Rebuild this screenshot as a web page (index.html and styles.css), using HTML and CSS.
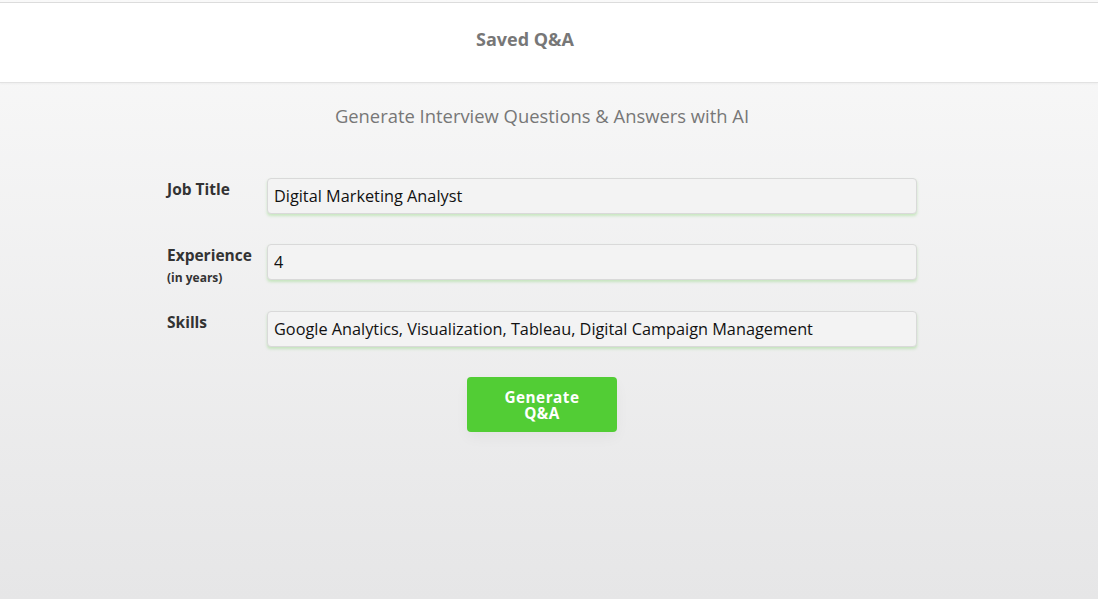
FILE: index.html
```html
<!DOCTYPE html>
<html>
<head>
<meta charset="utf-8">
<link rel="stylesheet" href="styles.css">
</head>
<body>
<header class="topbar">
  <div class="topbar-title">Saved Q&amp;A</div>
</header>
<main class="main">
  <h1 class="subtitle">Generate Interview Questions &amp; Answers with AI</h1>
  <form class="form">
    <div class="row">
      <label class="label"><span class="label-main">Job Title</span></label>
      <input class="field" type="text" value="Digital Marketing Analyst">
    </div>
    <div class="row row-tall">
      <label class="label"><span class="label-main">Experience</span><span class="label-sub">(in years)</span></label>
      <input class="field" type="text" value="4">
    </div>
    <div class="row">
      <label class="label"><span class="label-main">Skills</span></label>
      <input class="field" type="text" value="Google Analytics, Visualization, Tableau, Digital Campaign Management">
    </div>
    <div class="actions">
      <button class="btn" type="button">Generate<br>Q&amp;A</button>
    </div>
  </form>
</main>
</body>
</html>
```
FILE: styles.css
```css
html, body {
  margin: 0;
  padding: 0;
  height: 100%;
}
body {
  font-family: "Open Sans", "Liberation Sans", sans-serif;
  background: linear-gradient(to bottom, #f9f9f9 0%, #e6e6e7 100%);
  background-attachment: fixed;
  padding-top: 2px;
  box-sizing: border-box;
  overflow: hidden;
}
.topbar {
  background: #fff;
  border-top: 1px solid #dcdcdc;
  border-bottom: 1px solid #e2e2e2;
  box-shadow: 0 1px 2px rgba(0,0,0,0.04);
  height: 79px;
  display: flex;
  justify-content: center;
  padding-right: 48px;
}
.topbar-title {
  margin-top: 24px;
  font-size: 18px;
  font-weight: 700;
  color: #777;
  line-height: 25px;
}
.main {
  padding-right: 14px;
  display: flex;
  flex-direction: column;
  align-items: center;
}
.subtitle {
  margin: 20px 0 0;
  font-size: 18.4px;
  font-weight: 400;
  color: #777;
  line-height: 25px;
}
.form {
  width: 750px;
  margin-top: 50px;
  display: flex;
  flex-direction: column;
  gap: 30px;
}
.row {
  display: grid;
  grid-template-columns: 100px 650px;
  align-items: start;
  height: 36px;
}
.row-tall {
  height: 37px;
}
.label {
  display: flex;
  flex-direction: column;
  padding-top: 1px;
  color: #333;
  font-weight: 700;
}
.label-main {
  font-size: 15.5px;
  line-height: 21px;
}
.label-sub {
  font-size: 12px;
  line-height: 23px;
}
.field {
  box-sizing: border-box;
  width: 650px;
  height: 36px;
  margin: 0;
  padding: 0 6px;
  font-family: "Open Sans", "Liberation Sans", sans-serif;
  font-size: 16.3px;
  color: #111;
  background: #f3f3f3;
  border: 1px solid #d9d9d9;
  border-radius: 4px;
  box-shadow: 0 2px 3px rgba(90, 200, 60, 0.28);
  outline: none;
}
.actions {
  display: flex;
  justify-content: center;
  margin-top: 0;
}
.btn {
  width: 150px;
  height: 55px;
  border: none;
  border-radius: 4px;
  background: #52cd35;
  color: #fff;
  font-family: "Open Sans", "Liberation Sans", sans-serif;
  font-size: 15.3px;
  font-weight: 700;
  letter-spacing: 0.5px;
  line-height: 16px;
  padding-top: 2px;
  box-shadow: 0 6px 14px rgba(0,0,0,0.04);
  cursor: pointer;
}
```
